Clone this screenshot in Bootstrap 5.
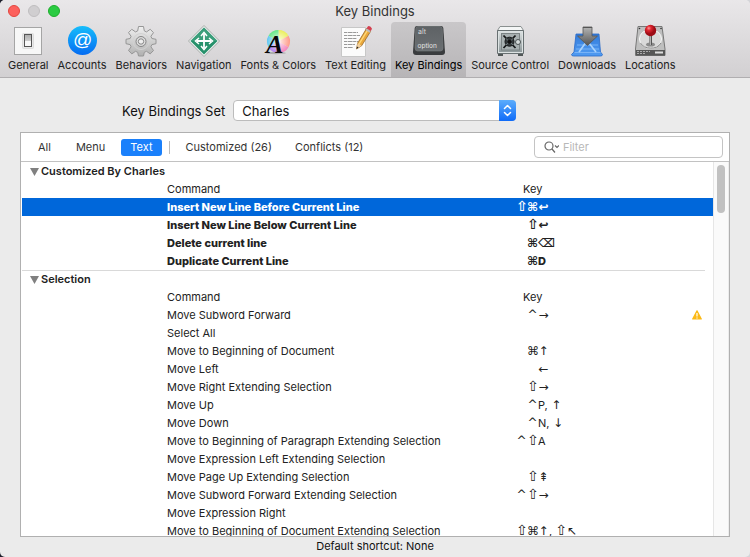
<!DOCTYPE html>
<html lang="en">
<head>
<meta charset="utf-8">
<meta name="viewport" content="width=device-width, initial-scale=1">
<title>Key Bindings</title>
<link href="https://cdn.jsdelivr.net/npm/bootstrap@5.3.0/dist/css/bootstrap.min.css" rel="stylesheet">
<style>
  body { font-family: Inter, "Liberation Sans", sans-serif; font-size: 11px; line-height: 18px; color: #222; background: linear-gradient(90deg, #1d1f2b 0 50%, #d4d4d8 50%); }
  .win { background: #ebebeb; border-radius: 5px; overflow: hidden; }
  .chrome { background: linear-gradient(#e9e7e9, #d2d0d2); border-bottom: 1px solid #b0aeb0; }
  .titlebar { height: 22px; }
  .titlebar h1 { font-size: 13px; line-height: 22px; font-weight: 400; color: #333; }
  .lights { left: 8px; top: 5px; gap: 8px; }
  .light { width: 12px; height: 12px; border-radius: 50%; border: 1px solid #e2463f; background: #fc615d; padding: 0; }
  .light-off { border-color: #bfbdbf; background: #d0ced0; }
  .light-on { border-color: #1dad2b; background: #2acb42; }
  .tools { height: 55px; padding-left: 4px; gap: 1px; }
  .tool { display: flex; flex-direction: column; align-items: center; padding: 3px 4px 0; border: 0; background: none; color: #222; border-radius: 4px 4px 0 0; line-height: 16px; white-space: nowrap; }
  .tool svg { display: block; width: 32px; height: 32px; overflow: visible; }
  .tool-on { background: linear-gradient(#c9c7c9, #b7b5b7); color: #000; }
  .setrow { padding: 22px 20px 11px 122px; gap: 8px; font-size: 13px; color: #111; }
  .setbox { width: 283px; }
  .setbox select { appearance: none; width: 100%; height: 21px; border: 1px solid #bcbcbc; border-radius: 4px; background: #fff; padding: 0 24px 0 8px; font-size: 13px; line-height: 18px; color: #111; }
  .stepper { position: absolute; right: 0; top: 0; width: 17px; height: 21px; background: linear-gradient(#5cadfc, #0f6bf8); border-radius: 0 4px 4px 0; pointer-events: none; }
  .stepper svg, .search svg { display: block; }
  .panel { margin: 0 20px; border: 1px solid #b0b0b0; background: #fff; min-height: 0; }
  .scopes { height: 29px; padding: 0 6px 0 8px; border-bottom: 1px solid #c2c2c2; gap: 7px; }
  .scope { border: 0; background: none; padding: 0 9px; border-radius: 3px; line-height: 17px; color: #333; white-space: nowrap; }
  .scope + .scope-last { padding-left: 7px; }
  .scope-on { background: #1a80fb; color: #fff; }
  .divide { width: 1px; height: 13px; background: #bbb; }
  .search { width: 189px; height: 22px; border: 1px solid #c4c4c4; border-radius: 4px; padding-left: 9px; gap: 4px; }
  .search input { border: 0; outline: 0; padding: 0; min-width: 0; background: none; line-height: 18px; }
  .search input::placeholder { color: #b8b8b8; opacity: 1; }
  .rows { padding-left: 1px; }
  .binds { table-layout: fixed; }
  .binds td, .binds th { height: 18px; padding: 0; font-weight: 400; white-space: nowrap; line-height: 18px; }
  .binds .sect th { font-weight: 600; padding-left: 8px; line-height: 17px; }
  .binds .ruled { background: linear-gradient(#d9d9d9, #d9d9d9) 0 0 / calc(100% - 8px) 1px no-repeat; }
  .binds .mods { text-align: right; }
  .binds .keyhead { padding-left: 12px; }
  .binds.binds .own td { font-weight: 800; }
  .picked td { background: #0067da; color: #fff; }
  .tri { width: 9px; height: 8px; margin-right: 2px; vertical-align: -1px; }
  .gl { font-family: "DejaVu Sans", sans-serif; font-size: 12px; display: inline-block; width: 11px; text-align: center; line-height: 16px; }
  .shift { font-size: 14px; }
  .track { width: 16px; background: #fafafa; border-left: 1px solid #e6e6e6; border-right: 1px solid #ececec; padding: 3px; }
  .thumb { width: 8px; height: 48px; border-radius: 4px; background: #c1c1c1; }
  .foot { line-height: 18px; padding-bottom: 2px; color: #111; }
</style>
<script src="https://cdn.jsdelivr.net/npm/bootstrap@5.3.0/dist/js/bootstrap.bundle.min.js"></script>
</head>
<body>
<div class="win vh-100 d-flex flex-column">
  <header class="chrome flex-shrink-0">
    <div class="titlebar position-relative">
      <div class="lights position-absolute d-flex">
        <button class="light" aria-label="Close"></button>
        <button class="light light-off" aria-label="Minimize"></button>
        <button class="light light-on" aria-label="Zoom"></button>
      </div>
      <h1 class="text-center m-0">Key Bindings</h1>
    </div>
    <nav class="tools d-flex" aria-label="Preferences">
      <button class="tool"><svg viewBox="0 0 32 32"><defs><linearGradient id="g1" x2="0" y2="1"><stop stop-color="#aaa"/><stop offset="1" stop-color="#eee"/></linearGradient></defs><rect x="2.500" y="2.500" width="27" height="27" fill="#f7f7f7" stroke="#a5a5a5"/><rect x="10.500" y="8.500" width="11" height="15" rx="1" fill="#e9e9e9" stroke="#ddd"/><rect x="12.500" y="9.500" width="7" height="12" fill="url(#g1)" stroke="#555"/><path d="M13 16h6v5h-6z" fill="#f8f8f8"/></svg>General</button>
      <button class="tool"><svg viewBox="0 0 32 32"><defs><linearGradient id="g2" x2="0" y2="1"><stop stop-color="#17bdfb"/><stop offset="1" stop-color="#056cf2"/></linearGradient></defs><circle cx="16.500" cy="15.500" r="14.500" fill="url(#g2)"/><text x="16.500" y="21" font-size="19" text-anchor="middle" fill="#fff" font-style="italic" font-family="Liberation Sans, sans-serif">@</text></svg>Accounts</button>
      <button class="tool"><svg viewBox="0 0 32 32"><defs><linearGradient id="g3" x2="0" y2="1"><stop stop-color="#f0f0f0"/><stop offset="1" stop-color="#b0b0b0"/></linearGradient></defs><path d="M13.500 1.500h5l.8 4.400 2.200 1 3.700-2.600 3.300 3.300-2.600 3.700 1 2.200 4.100.8v4.400l-4.100.9-1 2.200 2.600 3.700-3.300 3.400-3.700-2.600-2.200 1-.8 3.700h-5l-.8-3.700-2.200-1-3.700 2.600-3.300-3.400L6.100 21.800l-1-2.200-4.100-.9v-4.400l4.100-.8 1-2.200-2.600-3.700 3.300-3.300 3.700 2.600 2.200-1z" fill="url(#g3)" stroke="#969696" stroke-linejoin="round"/><circle cx="16" cy="16.500" r="8" fill="none" stroke="#d2d2d2"/><circle cx="16" cy="16.500" r="5" fill="#ddd" stroke="#858585"/><circle cx="16" cy="16.500" r="2.700" fill="#eee" stroke="#888"/></svg>Behaviors</button>
      <button class="tool"><svg viewBox="0 0 32 32"><path d="M16 .5 31.500 16 16 31.500.5 16z" fill="#f5f5f5" stroke="#a3aaa6"/><path d="M16 2.500 29.500 16 16 29.500 2.500 16z" fill="#27916b"/><path d="M16 2.500 29.500 16h-27z" fill="#48a783" opacity=".6"/><path d="M16 9v14M9 16h14" stroke="#fff" stroke-width="1.800"/><path d="M13 11l3-3.500 3 3.500M13 21l3 3.500 3-3.500M11 13l-3.500 3 3.500 3M21 13l3.500 3-3.500 3" fill="none" stroke="#fff" stroke-width="1.500"/></svg>Navigation</button>
      <button class="tool"><svg viewBox="0 0 32 32"><defs><radialGradient id="g4"><stop stop-color="#fff"/><stop offset=".3" stop-color="#fff" stop-opacity=".6"/><stop offset="1" stop-color="#fff" stop-opacity="0"/></radialGradient></defs><path d="M16.500 16.500V5a11.500 11.500 0 0 1 10 5.800z" fill="#ebef5e"/><path d="M16.500 16.500l10-5.700a11.500 11.500 0 0 1 0 11.400z" fill="#ff9b89"/><path d="M16.500 16.500l10 5.700a11.500 11.500 0 0 1-10 5.800z" fill="#f484bb"/><path d="M16.500 16.500V28a11.500 11.500 0 0 1-10-5.800z" fill="#b584ef"/><path d="M16.500 16.500l-10 5.700a11.500 11.500 0 0 1 0-11.400z" fill="#61c8f3"/><path d="M16.500 16.500l-10-5.700A11.500 11.500 0 0 1 16.500 5z" fill="#65e887"/><circle cx="16.500" cy="16.500" r="11.500" fill="url(#g4)"/><ellipse cx="14" cy="28" rx="10" ry="1.200" fill="#777" opacity=".45"/><text x="4" y="28" font-size="26" font-style="italic" font-weight="700" font-family="Liberation Serif, serif" fill="#080808">A</text></svg>Fonts &amp; Colors</button>
      <button class="tool"><svg viewBox="0 0 32 32"><path d="M1.500 2.500h24v29h-24z" fill="#fbfbfb" stroke="#c7c7c7"/><path d="M4 7.500h14M4 10.500h16M4 13.500h13M4 16.500h14M4 19.500h11M4 22.500h9" stroke="#999" stroke-dasharray="3 .6 5 .5"/><path d="M16.500 24l1.200-6L26.500 3.500l4.200 2.700-9.100 14.600z" fill="#eaa83c" stroke="#996a28" stroke-width=".8"/><path d="M19 19 28 4.500" stroke="#ffda7a" stroke-width="1.400"/><path d="M26.500 3.500 28 1.200q2.500-.8 4 2.500l-1.300 2.500z" fill="#d44050"/><path d="M25.600 5l1-1.600 4.100 2.700-1 1.600z" fill="#bbb"/><path d="M16.500 24l1.200-6 3.900 2.800z" fill="#f0cf9f"/><path d="M16.500 24l.5-2.500 1.600 1z" fill="#222"/></svg>Text Editing</button>
      <button class="tool tool-on" aria-current="page"><svg viewBox="0 0 32 32"><defs><linearGradient id="g5" x2="0" y2="1"><stop stop-color="#5e6265"/><stop offset="1" stop-color="#6b6f72"/></linearGradient></defs><path d="M4 1h24q2 0 2.300 2L32 27q0 3-3 3H3q-3 0-3-3L1.700 3Q2 1 4 1z" fill="#3a3c3e"/><path d="M5 1.500h22q2 0 2.200 2L30 23q0 3-2.500 3h-23Q2 26 2 23L2.800 3.500Q3 1.500 5 1.500z" fill="url(#g5)" stroke="#7b7f81" stroke-width=".6"/><text x="5" y="8.500" font-size="7" fill="#d9d9d9" font-family="Inter, sans-serif">alt</text><text x="4.500" y="23" font-size="6.500" fill="#e4e4e4" font-family="Inter, sans-serif">option</text></svg>Key Bindings</button>
      <button class="tool"><svg viewBox="0 0 32 32"><defs><linearGradient id="g6" x2="0" y2="1"><stop stop-color="#dce1e2"/><stop offset="1" stop-color="#8d9799"/></linearGradient></defs><path d="M4 28h5v3H4zM24 28h5v3h-5z" fill="#525858"/><path d="M6 1.500h21l2.500 4h-26z" fill="#f4f6f6" stroke="#8a9090"/><rect x="3" y="5" width="27" height="24" rx="1" fill="#687072"/><rect x="4.500" y="6.500" width="24" height="21" fill="url(#g6)" stroke="#dce2e2"/><rect x="7.500" y="8.500" width="18" height="16.500" fill="#a8b0b1" stroke="#7b8384"/><path d="M9.500 10.500 21.500 23M21.500 10.500 9.500 23" stroke="#161819" stroke-width="1.800"/><circle cx="15.500" cy="16.700" r="4.500" fill="#34393b" stroke="#161819"/><path d="M12 13.500l7 6.500M19 13.500 12 20" stroke="#717b7e"/><circle cx="15.500" cy="16.700" r="2" fill="#111"/><circle cx="24" cy="17" r="2.500" fill="#d4dada" stroke="#4b5253"/></svg>Source Control</button>
      <button class="tool"><svg viewBox="0 0 32 32"><defs><linearGradient id="g7" x2="0" y2="1"><stop stop-color="#337cdb"/><stop offset="1" stop-color="#509bf2"/></linearGradient><linearGradient id="g8" x2="0" y2="1"><stop stop-color="#b5b5b5"/><stop offset="1" stop-color="#555"/></linearGradient></defs><path d="M5 9h23l1.500 18 2 2.500q0 1.500-2 1.500H2.500q-2 0-2-1.500L3 27z" fill="url(#g7)" stroke="#2869c8" stroke-width=".8"/><path d="M3.500 27.500h26M5 24h23M6 20h21" stroke="#78b3f7"/><path d="M18 13 8 27M14 13l11 14" fill="none" stroke="#a8d2fc" stroke-width="1.700"/><path d="M12 2h9v9h5.500L16.500 20.500 6.500 11H12z" fill="url(#g8)" stroke="#555" stroke-width=".8"/><path d="M12 2.500h9" stroke="#555"/></svg>Downloads</button>
      <button class="tool"><svg viewBox="0 0 32 32"><defs><radialGradient id="g9" cx=".35" cy=".3"><stop stop-color="#ff9898"/><stop offset=".4" stop-color="#e12630"/><stop offset="1" stop-color="#9d0c15"/></radialGradient></defs><path d="M4 1.500h24L31 24v6.500H1.500V24z" fill="#bfbfbf" stroke="#777"/><path d="M2 25h29v5.500H2z" fill="#565656"/><path d="M3 26.500h13M3 28.500h9" stroke="#aaa" stroke-dasharray="2 1"/><path d="M21 27.500h8" stroke="#ddd" stroke-width="2"/><ellipse cx="16.500" cy="14" rx="11" ry="9.500" fill="#d9d9d9" stroke="#f8f8f8"/><path d="M6.500 18q3 5 10 5.200T27 18" fill="none" stroke="#888"/><circle cx="5.500" cy="3.500" r=".8" fill="#333"/><circle cx="27" cy="3.500" r=".8" fill="#333"/><ellipse cx="16.500" cy="19.500" rx="4.500" ry="2" fill="#8b8b8b"/><path d="M15.200 9h2.800v11h-2.800z" fill="#555"/><path d="M16.200 9v11" stroke="#ddd"/><circle cx="16.500" cy="5.500" r="5.700" fill="url(#g9)"/></svg>Locations</button>
    </nav>
  </header>

  <div class="setrow d-flex align-items-center flex-shrink-0">
    <label for="set">Key Bindings Set</label>
    <div class="setbox position-relative">
      <select id="set" class="d-block"><option>Charles</option></select>
      <span class="stepper"><svg width="17" height="21" fill="none" stroke="#fff" stroke-width="1.500" stroke-linecap="round" stroke-linejoin="round"><path d="M5.500 8.500l3-3 3 3M5.500 12.500l3 3 3-3"/></svg></span>
    </div>
  </div>

  <main class="panel flex-fill d-flex flex-column">
    <div class="scopes d-flex align-items-center flex-shrink-0">
      <button class="scope">All</button>
      <button class="scope">Menu</button>
      <button class="scope scope-on">Text</button>
      <span class="divide"></span>
      <button class="scope">Customized (26)</button>
      <button class="scope scope-last">Conflicts (12)</button>
      <label class="search ms-auto d-flex align-items-center">
        <svg width="16" height="14" fill="none" stroke="#666" stroke-width="1.200"><circle cx="5" cy="6" r="4"/><path d="M8 9l3 3.500M11 5.500l2 2 2-2"/></svg>
        <input class="flex-fill" type="search" placeholder="Filter" aria-label="Filter">
      </label>
    </div>
    <div class="d-flex flex-fill overflow-hidden">
      <div class="rows flex-fill overflow-hidden">
        <table class="binds w-100">
          <colgroup><col style="width:145px"><col style="width:344px"><col style="width:27px"><col><col style="width:21px"></colgroup>
          <tbody class="own">
            <tr class="sect"><th colspan="5"><svg class="tri" viewBox="0 0 9 8"><path d="M0 0h9L4.500 8z" fill="#808080"/></svg>Customized By Charles</th></tr>
            <tr><th></th><th scope="col">Command</th><th class="keyhead" colspan="3" scope="col">Key</th></tr>
            <tr class="picked"><td></td><td>Insert New Line Before Current Line</td><td class="mods"><span class="gl shift">⇧</span><span class="gl">⌘</span></td><td><span class="gl">↩</span></td><td></td></tr>
            <tr><td></td><td>Insert New Line Below Current Line</td><td class="mods"><span class="gl shift">⇧</span></td><td><span class="gl">↩</span></td><td></td></tr>
            <tr><td></td><td>Delete current line</td><td class="mods"><span class="gl">⌘</span></td><td><span class="gl">⌫</span></td><td></td></tr>
            <tr><td></td><td>Duplicate Current Line</td><td class="mods"><span class="gl">⌘</span></td><td>D</td><td></td></tr>
          </tbody>
          <tbody>
            <tr class="sect ruled"><th colspan="5"><svg class="tri" viewBox="0 0 9 8"><path d="M0 0h9L4.500 8z" fill="#808080"/></svg>Selection</th></tr>
            <tr><th></th><th scope="col">Command</th><th class="keyhead" colspan="3" scope="col">Key</th></tr>
            <tr><td></td><td>Move Subword Forward</td><td class="mods"><span class="gl">^</span></td><td><span class="gl">→</span></td><td><svg class="d-block" width="10" height="10" viewBox="0 0 10 10" role="img" aria-label="Conflict"><path d="M5 .8 9.300 9H.7z" fill="#fbb916" stroke="#fbb916" stroke-width="1.200" stroke-linejoin="round"/><path d="M5 3v3.500M5 7.400v1.200" stroke="#fff" stroke-width="1.200"/></svg></td></tr>
            <tr><td></td><td>Select All</td><td></td><td></td><td></td></tr>
            <tr><td></td><td>Move to Beginning of Document</td><td class="mods"><span class="gl">⌘</span></td><td><span class="gl">↑</span></td><td></td></tr>
            <tr><td></td><td>Move Left</td><td></td><td><span class="gl">←</span></td><td></td></tr>
            <tr><td></td><td>Move Right Extending Selection</td><td class="mods"><span class="gl shift">⇧</span></td><td><span class="gl">→</span></td><td></td></tr>
            <tr><td></td><td>Move Up</td><td class="mods"><span class="gl">^</span></td><td>P, <span class="gl">↑</span></td><td></td></tr>
            <tr><td></td><td>Move Down</td><td class="mods"><span class="gl">^</span></td><td>N, <span class="gl">↓</span></td><td></td></tr>
            <tr><td></td><td>Move to Beginning of Paragraph Extending Selection</td><td class="mods"><span class="gl">^</span><span class="gl shift">⇧</span></td><td>A</td><td></td></tr>
            <tr><td></td><td>Move Expression Left Extending Selection</td><td></td><td></td><td></td></tr>
            <tr><td></td><td>Move Page Up Extending Selection</td><td class="mods"><span class="gl shift">⇧</span></td><td><span class="gl">⇞</span></td><td></td></tr>
            <tr><td></td><td>Move Subword Forward Extending Selection</td><td class="mods"><span class="gl">^</span><span class="gl shift">⇧</span></td><td><span class="gl">→</span></td><td></td></tr>
            <tr><td></td><td>Move Expression Right</td><td></td><td></td><td></td></tr>
            <tr><td></td><td>Move to Beginning of Document Extending Selection</td><td class="mods"><span class="gl shift">⇧</span><span class="gl">⌘</span></td><td><span class="gl">↑</span>, <span class="gl shift">⇧</span><span class="gl">↖</span></td><td></td></tr>
          </tbody>
        </table>
      </div>
      <div class="track flex-shrink-0"><div class="thumb"></div></div>
    </div>
  </main>
  <footer class="foot text-center flex-shrink-0">Default shortcut: None</footer>
</div>
</body>
</html>
